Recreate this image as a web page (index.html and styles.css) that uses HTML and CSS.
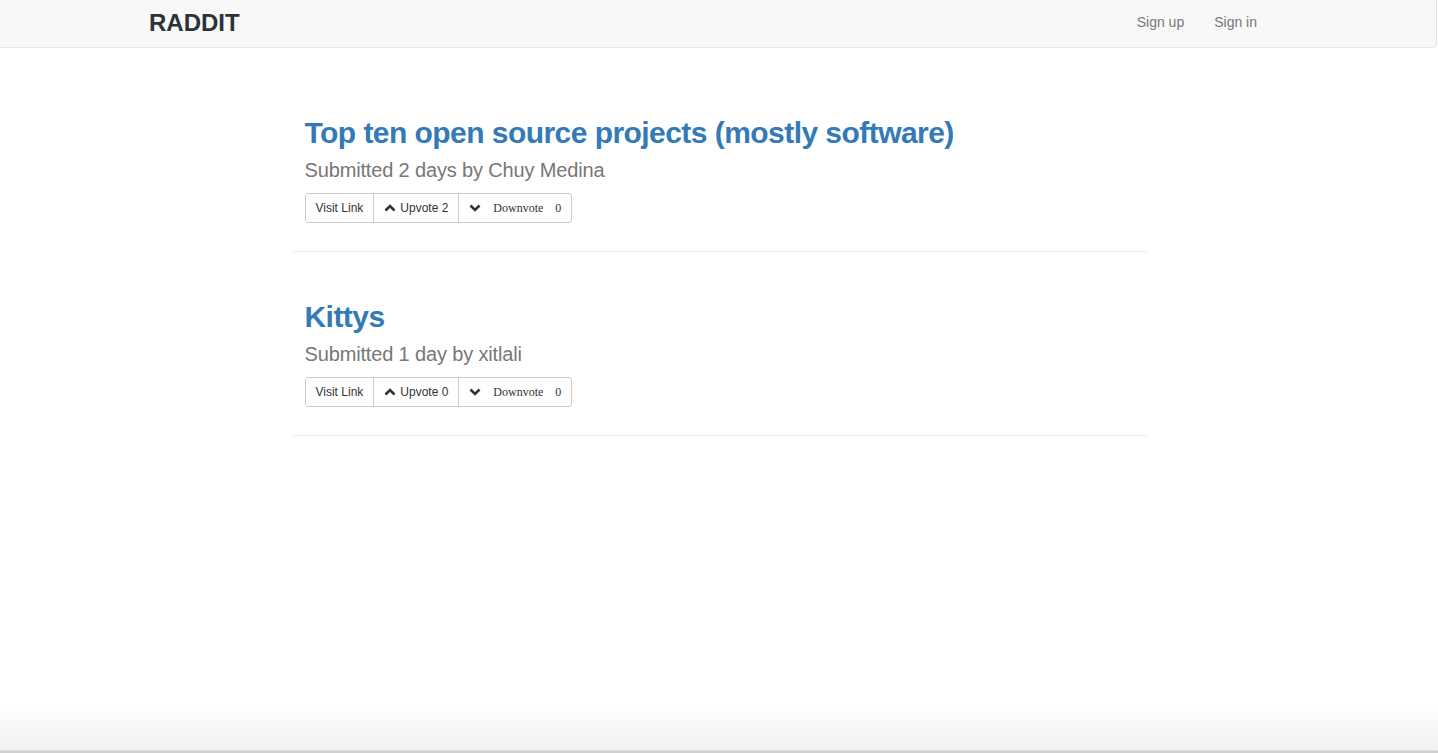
FILE: index.html
```html
<!DOCTYPE html>
<html lang="en">
<head>
<meta charset="utf-8">
<title>Raddit</title>
<link rel="stylesheet" href="styles.css">
</head>
<body>
<header class="navbar">
  <div class="nav-inner">
    <a class="brand" href="#">RADDIT</a>
    <nav class="nav-links">
      <a href="#">Sign up</a>
      <a href="#">Sign in</a>
    </nav>
  </div>
</header>
<main class="posts">
  <article class="post">
    <h2 class="post-title"><a href="#">Top ten open source projects (mostly software)</a></h2>
    <p class="post-meta">Submitted 2 days by Chuy Medina</p>
    <div class="btn-group">
      <a class="btn" href="#">Visit Link</a>
      <a class="btn" href="#"><svg class="chev" viewBox="0 0 12 8"><path d="M1.5 6.5 L6 2 L10.5 6.5"/></svg>Upvote 2</a>
      <a class="btn btn-down" href="#"><svg class="chev" viewBox="0 0 12 8"><path d="M1.5 1.5 L6 6 L10.5 1.5"/></svg><span class="down-label">Downvote</span><span class="down-count">0</span></a>
    </div>
  </article>
  <article class="post">
    <h2 class="post-title"><a href="#">Kittys</a></h2>
    <p class="post-meta">Submitted 1 day by xitlali</p>
    <div class="btn-group">
      <a class="btn" href="#">Visit Link</a>
      <a class="btn" href="#"><svg class="chev" viewBox="0 0 12 8"><path d="M1.5 6.5 L6 2 L10.5 6.5"/></svg>Upvote 0</a>
      <a class="btn btn-down" href="#"><svg class="chev" viewBox="0 0 12 8"><path d="M1.5 1.5 L6 6 L10.5 1.5"/></svg><span class="down-label">Downvote</span><span class="down-count">0</span></a>
    </div>
  </article>
</main>
</body>
</html>
```
FILE: styles.css
```css
html {
  height: 100%;
  background: linear-gradient(to bottom, #ffffff 0, #ffffff calc(100% - 50px), #f1f1f1 calc(100% - 3px), #cfcfcf calc(100% - 2px), #cfcfcf 100%);
}
body {
  margin: 0;
  font-family: "Liberation Sans", Arial, sans-serif;
  font-size: 14px;
  color: #333;
}
a { text-decoration: none; }

.navbar {
  height: 47px;
  background: #f8f8f8;
  border-bottom: 1px solid #e7e7e7;
  border-right: 1px solid #e2e2e2;
  border-bottom-right-radius: 4px;
  margin-right: 1px;
}
.nav-inner {
  height: 100%;
  padding: 0 179px 0 149px;
  display: flex;
  align-items: center;
  justify-content: space-between;
}
.brand {
  font-size: 24px;
  font-weight: bold;
  color: #2d3239;
  margin-top: -2px;
}
.nav-links {
  display: flex;
  gap: 30px;
  margin-top: -3px;
}
.nav-links a {
  color: #777;
  font-size: 14px;
}

.posts {
  width: 855px;
  margin: 0 auto;
  padding-top: 20px;
}
.post {
  padding: 48px 13px 28px;
  border-bottom: 1px solid #eee;
}
.post-title {
  margin: 0;
  font-size: 30px;
  line-height: 33px;
  font-weight: bold;
  letter-spacing: -0.55px;
}
.post-title a { color: #337ab7; }
.post-meta {
  margin: 10px 0 0;
  font-size: 20px;
  line-height: 22px;
  letter-spacing: -0.15px;
  color: #777;
}
.btn-group {
  margin-top: 12px;
  display: inline-flex;
}
.btn {
  display: inline-flex;
  align-items: center;
  height: 28px;
  padding: 0 10px;
  border: 1px solid #ccc;
  background: #fff;
  color: #333;
  font-size: 12px;
}
.btn + .btn { margin-left: -1px; }
.btn:first-child { border-radius: 3px 0 0 3px; }
.btn:last-child { border-radius: 0 3px 3px 0; }
.chev {
  width: 12px;
  height: 8px;
  margin-right: 4px;
  fill: none;
  stroke: #333;
  stroke-width: 2.6;
}
.btn-down .chev { margin-right: 12px; }
.down-label,
.down-count {
  font-family: "Liberation Serif", "Times New Roman", serif;
  font-size: 12px;
}
.down-count { margin-left: 12px; }
```
